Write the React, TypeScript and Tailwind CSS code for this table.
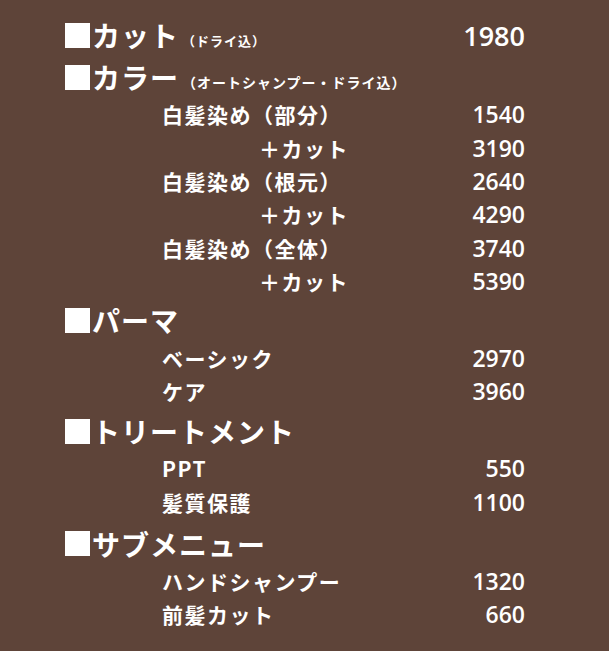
import React from 'react';

type Item = { label: string; price: string; indent?: boolean };
type Section = { title: string; note?: string; price?: string; gap?: string; items: Item[] };

const sections: Section[] = [
  { title: 'カット', note: '（ドライ込）', price: '1980', items: [] },
  {
    title: 'カラー',
    note: '（オートシャンプー・ドライ込）',
    items: [
      { label: '白髪染め（部分）', price: '1540' },
      { label: '＋カット', price: '3190', indent: true },
      { label: '白髪染め（根元）', price: '2640' },
      { label: '＋カット', price: '4290', indent: true },
      { label: '白髪染め（全体）', price: '3740' },
      { label: '＋カット', price: '5390', indent: true },
    ],
  },
  {
    title: 'パーマ',
    gap: 'mt-[1px]',
    items: [
      { label: 'ベーシック', price: '2970' },
      { label: 'ケア', price: '3960' },
    ],
  },
  {
    title: 'トリートメント',
    gap: 'mt-[2px]',
    items: [
      { label: 'PPT', price: '550' },
      { label: '髪質保護', price: '1100' },
    ],
  },
  {
    title: 'サブメニュー',
    gap: 'mt-[4px]',
    items: [
      { label: 'ハンドシャンプー', price: '1320' },
      { label: '前髪カット', price: '660' },
    ],
  },
];

const jp = "font-['Noto_Sans_CJK_JP',sans-serif]";
const num = "font-['Open_Sans',sans-serif]";

export default function App() {
  return (
    <div className="w-[609px] h-[651px] bg-[#5e4439] text-white overflow-hidden">
      <div className="ml-[65px] w-[460px] pt-[14px]">
        {sections.map((s, i) => (
          <div key={s.title} className={s.gap ?? ''}>
            {/* heading row */}
            <div className="h-[42px] flex items-center justify-between">
              <div className={`flex items-end ${jp}`}>
                <span className="w-[25px] h-[25px] bg-white mr-[2px] self-center" />
                <span className="text-[28px] font-bold leading-none tracking-[1px]">{s.title}</span>
                {s.note && (
                  <span
                    className={`font-bold leading-none ml-[3px] mb-[2px] ${
                      i === 0 ? 'text-[13px] tracking-[1px]' : 'text-[14px] tracking-[1px]'
                    }`}
                  >
                    {s.note}
                  </span>
                )}
              </div>
              {s.price && <span className={`${num} text-[27px] font-semibold leading-none`}>{s.price}</span>}
            </div>

            {s.items.map((it, j) => (
              <div key={j} className="h-[33.4px] flex items-center justify-between">
                <span
                  className={`${jp} text-[21px] font-bold leading-none tracking-[1.5px] ${
                    it.indent ? 'pl-[194px]' : 'pl-[97px]'
                  }`}
                >
                  {it.label}
                </span>
                <span className={`${num} text-[23px] font-semibold leading-none`}>{it.price}</span>
              </div>
            ))}
          </div>
        ))}
      </div>
    </div>
  );
}
